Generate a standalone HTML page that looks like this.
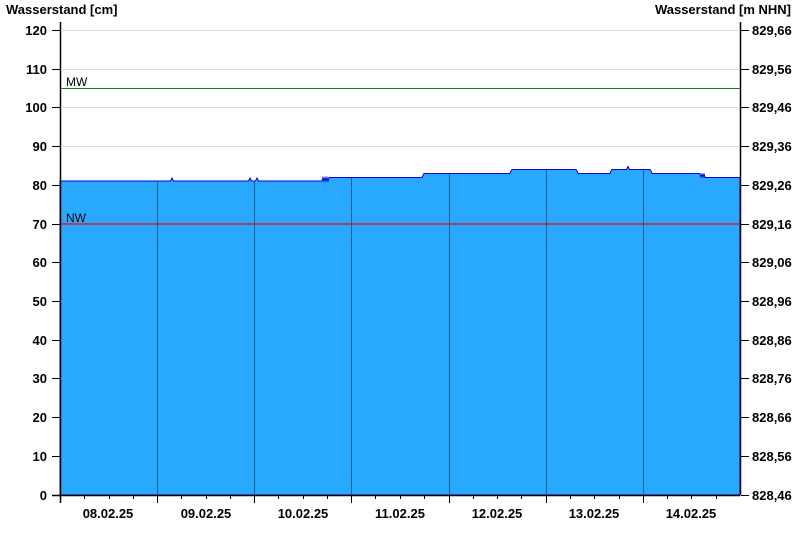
<!DOCTYPE html>
<html><head><meta charset="utf-8"><style>
html,body{margin:0;padding:0;background:#fff;width:800px;height:550px;overflow:hidden}
svg{display:block}
text{font-family:"Liberation Sans",Arial,sans-serif;font-weight:bold;font-size:13px;fill:#000}
</style></head><body>
<svg width="800" height="550" viewBox="0 0 800 550" xmlns="http://www.w3.org/2000/svg">
<text x="6" y="14">Wasserstand [cm]</text>
<text x="791" y="14" text-anchor="end">Wasserstand [m NHN]</text>
<g stroke="#dcdcdc" stroke-width="1">
<line x1="60" y1="30.5" x2="740" y2="30.5"/>
<line x1="60" y1="69.5" x2="740" y2="69.5"/>
<line x1="60" y1="107.5" x2="740" y2="107.5"/>
<line x1="60" y1="146.5" x2="740" y2="146.5"/>
</g>
<path fill="#29a8ff" stroke="#0000e0" stroke-width="1" d="M60,495 L60,181 L170.5,181 L172,178 L173.5,181 L248.5,181 L250,178 L251.5,181 L255.5,181 L257,178 L258.5,181 L322,181 L323,177.5 L324,181 L325,177.5 L326,181 L327,177.5 L328,181 L329,177.5 L332,177.5 L422,177.5 L424,173.5 L510,173.5 L511,171 L512,169.5 L576,169.5 L577,171 L578,173.5 L610,173.5 L611,171 L612,169.5 L626.5,169.5 L628,166.5 L629.5,169.5 L650,169.5 L651,171 L652,173.5 L700,173.5 L701,177.5 L702,173.5 L703,177.5 L704,173.5 L705,177.5 L740,177.5 L740,495 Z"/>
<g stroke="#215e8c" stroke-width="1">
<line x1="157.5" y1="181" x2="157.5" y2="495"/>
<line x1="254.5" y1="181" x2="254.5" y2="495"/>
<line x1="351.5" y1="178" x2="351.5" y2="495"/>
<line x1="449.5" y1="174" x2="449.5" y2="495"/>
<line x1="546.5" y1="170" x2="546.5" y2="495"/>
<line x1="643.5" y1="170" x2="643.5" y2="495"/>
</g>
<line x1="60" y1="88.5" x2="740" y2="88.5" stroke="#0a8a0a" stroke-width="1"/>
<line x1="60" y1="224" x2="740" y2="224" stroke="#ff0000" stroke-width="1.2"/>
<text x="66" y="86" style="font-weight:normal;font-size:12px">MW</text>
<text x="66" y="222" style="font-weight:normal;font-size:12px">NW</text>
<g stroke="#000" stroke-width="1.5">
<line x1="60.5" y1="22" x2="60.5" y2="503"/>
<line x1="740.5" y1="22" x2="740.5" y2="495"/>
<line x1="52" y1="495.5" x2="740" y2="495.5"/>
</g>
<g stroke="#000" stroke-width="1">
<line x1="52" y1="30.5" x2="60" y2="30.5"/><line x1="52" y1="69.5" x2="60" y2="69.5"/><line x1="52" y1="107.5" x2="60" y2="107.5"/><line x1="52" y1="146.5" x2="60" y2="146.5"/><line x1="52" y1="185.5" x2="60" y2="185.5"/><line x1="52" y1="224.5" x2="60" y2="224.5"/><line x1="52" y1="262.5" x2="60" y2="262.5"/><line x1="52" y1="301.5" x2="60" y2="301.5"/><line x1="52" y1="340.5" x2="60" y2="340.5"/><line x1="52" y1="378.5" x2="60" y2="378.5"/><line x1="52" y1="417.5" x2="60" y2="417.5"/><line x1="52" y1="456.5" x2="60" y2="456.5"/>
</g>
<g stroke="#000" stroke-width="1" transform="translate(689,0)">
<line x1="52" y1="30.5" x2="60" y2="30.5"/><line x1="52" y1="69.5" x2="60" y2="69.5"/><line x1="52" y1="107.5" x2="60" y2="107.5"/><line x1="52" y1="146.5" x2="60" y2="146.5"/><line x1="52" y1="185.5" x2="60" y2="185.5"/><line x1="52" y1="224.5" x2="60" y2="224.5"/><line x1="52" y1="262.5" x2="60" y2="262.5"/><line x1="52" y1="301.5" x2="60" y2="301.5"/><line x1="52" y1="340.5" x2="60" y2="340.5"/><line x1="52" y1="378.5" x2="60" y2="378.5"/><line x1="52" y1="417.5" x2="60" y2="417.5"/><line x1="52" y1="456.5" x2="60" y2="456.5"/><line x1="52" y1="495.5" x2="60" y2="495.5"/>
</g>
<g text-anchor="end">
<text x="47" y="35">120</text><text x="47" y="74">110</text><text x="47" y="112">100</text><text x="47" y="151">90</text><text x="47" y="190">80</text><text x="47" y="229">70</text><text x="47" y="267">60</text><text x="47" y="306">50</text><text x="47" y="345">40</text><text x="47" y="383">30</text><text x="47" y="422">20</text><text x="47" y="461">10</text><text x="47" y="500">0</text>
</g>
<g>
<text x="752" y="35">829,66</text><text x="752" y="74">829,56</text><text x="752" y="112">829,46</text><text x="752" y="151">829,36</text><text x="752" y="190">829,26</text><text x="752" y="229">829,16</text><text x="752" y="267">829,06</text><text x="752" y="306">828,96</text><text x="752" y="345">828,86</text><text x="752" y="383">828,76</text><text x="752" y="422">828,66</text><text x="752" y="461">828,56</text><text x="752" y="500">828,46</text>
</g>
<g stroke="#000" stroke-width="1">
<line x1="157.5" y1="495" x2="157.5" y2="503"/><line x1="254.5" y1="495" x2="254.5" y2="503"/><line x1="351.5" y1="495" x2="351.5" y2="503"/><line x1="449.5" y1="495" x2="449.5" y2="503"/><line x1="546.5" y1="495" x2="546.5" y2="503"/><line x1="643.5" y1="495" x2="643.5" y2="503"/>
<path d="M84.5,495v4M109.5,495v4M133.5,495v4M181.5,495v4M206.5,495v4M230.5,495v4M278.5,495v4M303.5,495v4M327.5,495v4M375.5,495v4M400.5,495v4M424.5,495v4M473.5,495v4M497.5,495v4M521.5,495v4M570.5,495v4M594.5,495v4M619.5,495v4M667.5,495v4M691.5,495v4M716.5,495v4"/>
</g>
<g text-anchor="middle">
<text x="108" y="518">08.02.25</text><text x="206" y="518">09.02.25</text><text x="303" y="518">10.02.25</text><text x="400" y="518">11.02.25</text><text x="497" y="518">12.02.25</text><text x="594" y="518">13.02.25</text><text x="691" y="518">14.02.25</text>
</g>
</svg>
</body></html>
